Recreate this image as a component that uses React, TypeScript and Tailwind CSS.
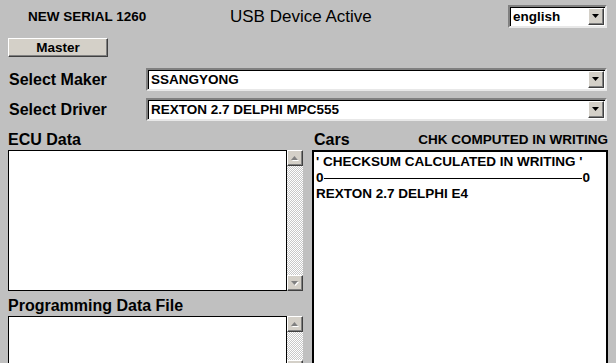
import React from 'react';

function DropArrow() {
  return (
    <div className="w-[16px] h-full bg-[#d4d0c8] border border-t-white border-l-white border-r-[#404040] border-b-[#404040] shadow-[inset_-1px_-1px_0_#808080] flex items-center justify-center">
      <svg width="8" height="5" viewBox="0 0 8 5">
        <path d="M0 0 H7 L3.5 4 Z" fill="#000" />
      </svg>
    </div>
  );
}

function ComboBox({ value, width }: { value: string; width: string }) {
  return (
    <div className={`${width} h-[23px] bg-white border-2 border-t-[#808080] border-l-[#808080] border-r-[#e8e8e8] border-b-[#e8e8e8] shadow-[inset_1px_1px_0_#000] flex items-stretch`}>
      <div className="flex-1 pl-[3px] pt-[2px] text-[13.5px] font-bold leading-[16px] text-black">{value}</div>
      <div className="py-[1px] pr-[1px]">
        <DropArrow />
      </div>
    </div>
  );
}

function ScrollButton({ up }: { up: boolean }) {
  return (
    <div className="w-[16px] h-[16px] bg-[#d4d0c8] border border-t-white border-l-white border-r-[#404040] border-b-[#404040] shadow-[inset_-1px_-1px_0_#808080] flex items-center justify-center">
      <svg width="8" height="5" viewBox="0 0 8 5">
        {up ? (
          <>
            <path d="M1 5 H8 L4.5 1 Z" fill="#fff" />
            <path d="M0 4 H7 L3.5 0 Z" fill="#808080" />
          </>
        ) : (
          <>
            <path d="M1 1 H8 L4.5 5 Z" fill="#fff" />
            <path d="M0 0 H7 L3.5 4 Z" fill="#808080" />
          </>
        )}
      </svg>
    </div>
  );
}

function MemoBox({ height }: { height: string }) {
  return (
    <div className={`flex ${height}`}>
      <div className="w-[279px] h-full bg-white border border-black" />
      <div className="w-[16px] h-full flex flex-col justify-between bg-[repeating-conic-gradient(#ffffff_0%_25%,#c8c8c8_0%_50%)] bg-[length:2px_2px]">
        <ScrollButton up />
        <ScrollButton up={false} />
      </div>
    </div>
  );
}

export default function App() {
  return (
    <div className="w-[616px] h-[363px] bg-[#c0c0c0] overflow-hidden text-black font-['Liberation_Sans',Arial,sans-serif] select-none">
      {/* top line */}
      <div className="flex items-start h-[28px] pt-[5px]">
        <div className="w-[230px] pl-[28px] pt-[4px] text-[13.5px] font-bold leading-[16px]">NEW SERIAL 1260</div>
        <div className="pt-[2px] text-[17px] leading-[20px]">USB Device Active</div>
        <div className="ml-auto mr-[9px]">
          <ComboBox value="english" width="w-[99px]" />
        </div>
      </div>

      <div className="pl-[8px] pt-[10px]">
        <button className="block w-[100px] h-[19px] bg-[#d4d0c8] border border-t-white border-l-white border-r-[#404040] border-b-[#404040] shadow-[inset_-1px_-1px_0_#808080] text-[13.5px] font-bold leading-[15px]">
          Master
        </button>
      </div>

      <div className="flex items-center mt-[11px] pl-[9px]">
        <div className="w-[137px] text-[16px] font-bold leading-[20px]">Select Maker</div>
        <ComboBox value="SSANGYONG" width="w-[461px]" />
      </div>
      <div className="flex items-center mt-[7px] pl-[9px]">
        <div className="w-[137px] text-[16px] font-bold leading-[20px]">Select Driver</div>
        <ComboBox value="REXTON 2.7 DELPHI MPC555" width="w-[461px]" />
      </div>

      <div className="flex mt-[9px] pl-[8px] gap-[9px]">
        <div className="w-[295px] flex flex-col">
          <div className="h-[20px] text-[16px] font-bold leading-[20px]">ECU Data</div>
          <MemoBox height="h-[141px]" />
          <div className="h-[25px] pt-[5px] text-[16px] font-bold leading-[20px]">Programming Data File</div>
          <MemoBox height="h-[60px]" />
        </div>

        <div className="w-[296px] flex flex-col">
          <div className="h-[20px] flex items-end justify-between">
            <span className="pl-[2px] text-[16px] font-bold leading-[20px]">Cars</span>
            <span className="text-[13.5px] font-bold leading-[17px] pb-[2px]">CHK COMPUTED IN WRITING</span>
          </div>
          <div className="h-[230px] bg-white border-2 border-black pl-[2px] pt-[2px] text-[13.5px] font-bold leading-[16px]">
            <div>' CHECKSUM CALCULATED IN WRITING '</div>
            <div className="flex items-center w-[274px]">
              <span>0</span>
              <div className="flex-1 h-px bg-black" />
              <span>0</span>
            </div>
            <div>REXTON 2.7 DELPHI E4</div>
          </div>
        </div>
      </div>
    </div>
  );
}
